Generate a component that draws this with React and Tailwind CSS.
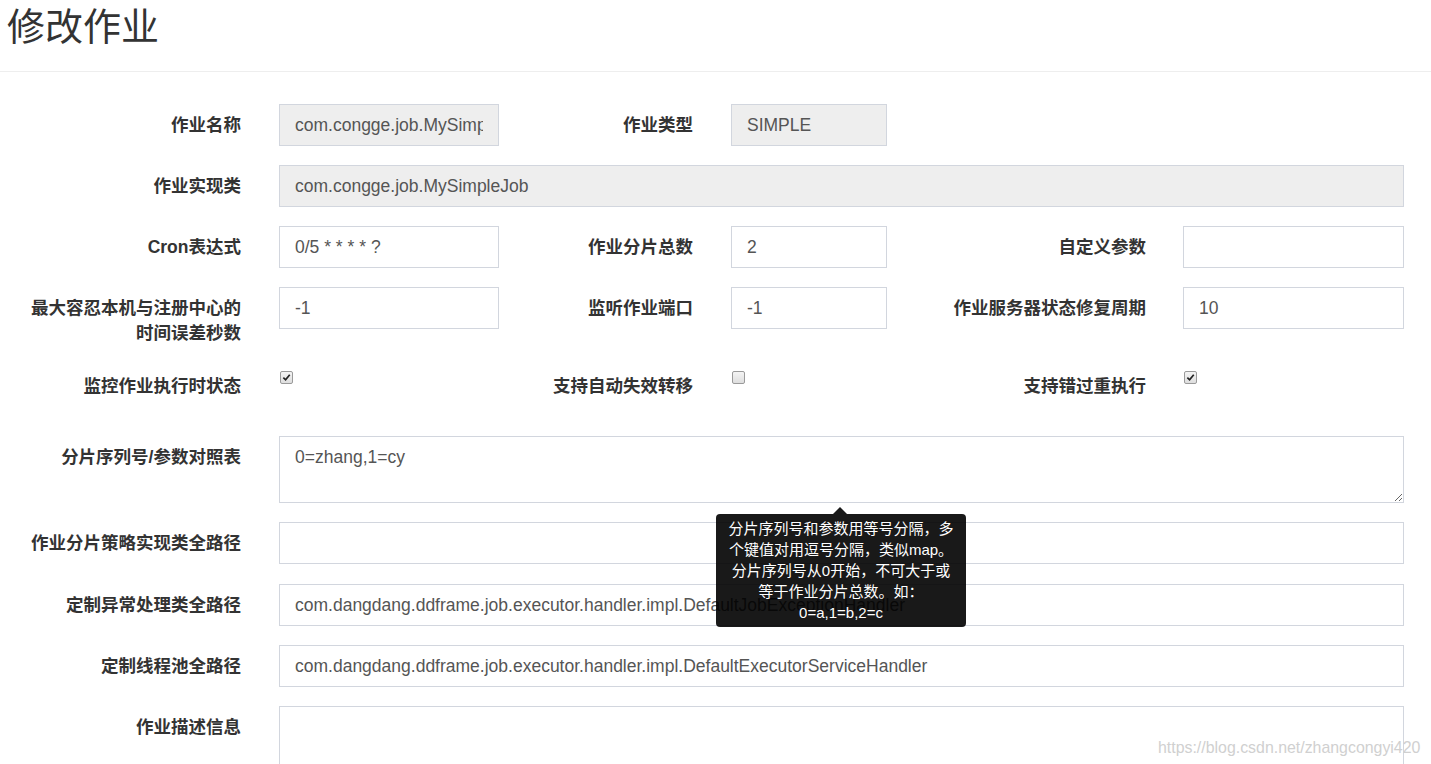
import React from "react";

const FONT = { fontFamily: '"Liberation Sans", "Noto Sans CJK SC", sans-serif' };

const Label = ({ w = "w-[241px]", children }) => (
  <label className={`${w} shrink-0 text-right font-bold text-[17.5px] leading-[25px] pt-[9px] text-[#333]`}>
    {children}
  </label>
);

const Input = ({ w, value = "", disabled }) => (
  <input
    readOnly
    defaultValue={value}
    className={`${w} shrink-0 h-[42px] px-[15px] text-[17.5px] text-[#555] border border-[#d2d6de] outline-none ${
      disabled ? "bg-[#eee]" : "bg-white"
    }`}
    style={FONT}
  />
);

const Check = ({ checked }) => (
  <span className="mt-[6px] ml-[1px] w-[13px] h-[13px] shrink-0 rounded-[2px] border border-[#9a9a9a] bg-gradient-to-b from-[#f4f4f4] to-[#dedede] flex items-center justify-center">
    {checked && (
      <svg width="9" height="9" viewBox="0 0 10 10">
        <path d="M1.5 5.2 L4 7.6 L8.6 2" stroke="#222" strokeWidth="1.9" fill="none" />
      </svg>
    )}
  </span>
);

export default function App() {
  return (
    <div className="relative bg-white min-h-screen overflow-hidden" style={FONT}>
      {/* header */}
      <div className="h-[72px] border-b border-[#eee] pl-[7px] pt-[5px]">
        <h1 className="text-[38px] leading-[44px] font-normal text-[#333]">修改作业</h1>
      </div>

      <div className="pt-[32px] flex flex-col">
        {/* row 1 */}
        <div className="flex mb-[19px]">
          <Label>作业名称</Label>
          <div className="ml-[38px]"><Input w="w-[220px]" value="com.congge.job.MySimpleJob" disabled /></div>
          <Label w="w-[194px]">作业类型</Label>
          <div className="ml-[38px]"><Input w="w-[156px]" value="SIMPLE" disabled /></div>
        </div>

        {/* row 2 */}
        <div className="flex mb-[19px]">
          <Label>作业实现类</Label>
          <div className="ml-[38px]"><Input w="w-[1125px]" value="com.congge.job.MySimpleJob" disabled /></div>
        </div>

        {/* row 3 */}
        <div className="flex mb-[19px]">
          <Label>Cron表达式</Label>
          <div className="ml-[38px]"><Input w="w-[220px]" value="0/5 * * * * ?" /></div>
          <Label w="w-[194px]">作业分片总数</Label>
          <div className="ml-[38px]"><Input w="w-[156px]" value="2" /></div>
          <Label w="w-[259px]">自定义参数</Label>
          <div className="ml-[37px]"><Input w="w-[221px]" value="" /></div>
        </div>

        {/* row 4 */}
        <div className="flex h-[59px] mb-[19px]">
          <Label>最大容忍本机与注册中心的<br />时间误差秒数</Label>
          <div className="ml-[38px]"><Input w="w-[220px]" value="-1" /></div>
          <Label w="w-[194px]">监听作业端口</Label>
          <div className="ml-[38px]"><Input w="w-[156px]" value="-1" /></div>
          <Label w="w-[259px]">作业服务器状态修复周期</Label>
          <div className="ml-[37px]"><Input w="w-[221px]" value="10" /></div>
        </div>

        {/* row 5 - checkboxes */}
        <div className="flex h-[52px] mb-[19px]">
          <Label>监控作业执行时状态</Label>
          <div className="ml-[38px] w-[220px] flex"><Check checked /></div>
          <Label w="w-[194px]">支持自动失效转移</Label>
          <div className="ml-[38px] w-[156px] flex"><Check /></div>
          <Label w="w-[259px]">支持错过重执行</Label>
          <div className="ml-[37px] w-[221px] flex"><Check checked /></div>
        </div>

        {/* row 6 */}
        <div className="flex mb-[19px]">
          <Label>分片序列号/参数对照表</Label>
          <textarea
            readOnly
            defaultValue="0=zhang,1=cy"
            className="ml-[38px] w-[1125px] h-[67px] px-[15px] py-[8px] leading-[25px] text-[17.5px] text-[#555] border border-[#d2d6de] outline-none"
            style={FONT}
          />
        </div>

        {/* row 7 */}
        <div className="flex mb-[20px]">
          <Label>作业分片策略实现类全路径</Label>
          <div className="ml-[38px]"><Input w="w-[1125px]" value="" /></div>
        </div>

        {/* row 8 */}
        <div className="flex mb-[19px]">
          <Label>定制异常处理类全路径</Label>
          <div className="ml-[38px]">
            <Input w="w-[1125px]" value="com.dangdang.ddframe.job.executor.handler.impl.DefaultJobExceptionHandler" />
          </div>
        </div>

        {/* row 9 */}
        <div className="flex mb-[19px]">
          <Label>定制线程池全路径</Label>
          <div className="ml-[38px]">
            <Input w="w-[1125px]" value="com.dangdang.ddframe.job.executor.handler.impl.DefaultExecutorServiceHandler" />
          </div>
        </div>

        {/* row 10 */}
        <div className="flex mb-[19px]">
          <Label>作业描述信息</Label>
          <textarea
            readOnly
            className="ml-[38px] w-[1125px] h-[90px] px-[15px] py-[8px] text-[17.5px] text-[#555] border border-[#d2d6de] outline-none resize-none"
            style={FONT}
          />
        </div>
      </div>

      {/* tooltip */}
      <div className="absolute left-[716px] top-[507px] w-[250px]">
        <div className="ml-[117px] w-0 h-0 border-l-[7px] border-r-[7px] border-b-[7px] border-l-transparent border-r-transparent border-b-black/90" />
        <div className="bg-black/90 rounded-[4px] px-[10px] py-[4px] text-white text-[15px] leading-[21px] text-center">
          分片序列号和参数用等号分隔，多<br />
          个键值对用逗号分隔，类似map。<br />
          分片序列号从0开始，不可大于或<br />
          等于作业分片总数。如：<br />
          0=a,1=b,2=c
        </div>
      </div>

      {/* watermark */}
      <div className="absolute left-[1158px] top-[736px] text-[15.9px] text-[#d0d0d0] whitespace-nowrap">
        https://blog.csdn.net/zhangcongyi420
      </div>
    </div>
  );
}
